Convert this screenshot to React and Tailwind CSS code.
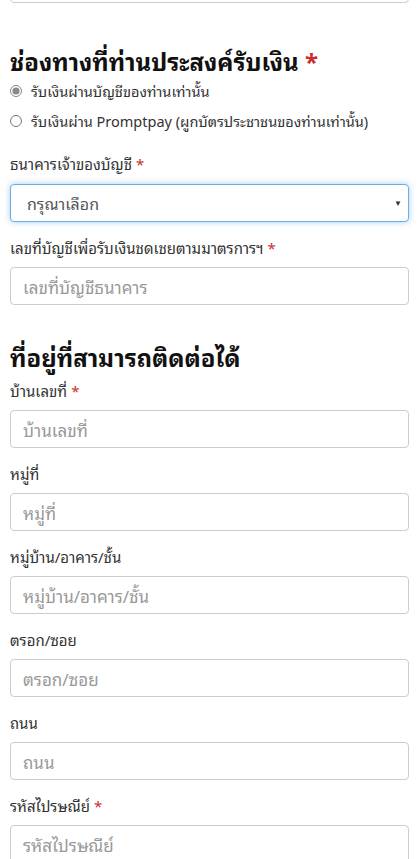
import React, { useState } from "react";

const FONT = {
  fontFamily:
    '"Noto Sans Thai Looped", Loma, Garuda, "Leelawadee UI", Tahoma, "Noto Sans Thai", "Noto Sans", sans-serif',
};

const Req = () => <span className="text-[#c9302c] ml-1">*</span>;

const Field = ({ label, required, placeholder }) => (
  <div className="mb-[15px]">
    <label className="block text-[15px] leading-[20px] text-[#333] mb-[10px]">
      {label}
      {required && <Req />}
    </label>
    <input
      type="text"
      placeholder={placeholder}
      className="w-full h-[38px] border border-[#ccc] rounded-[4px] px-3 text-[17px] text-[#555] placeholder:text-[#999] bg-white outline-none"
    />
  </div>
);

const App = () => {
  const [channel, setChannel] = useState("bank");

  return (
    <div className="bg-white min-h-screen px-[10px] overflow-hidden" style={FONT}>
      <div className="-mt-[35px] h-[38px] border border-[#ccc] rounded-[4px]"></div>

      <h2 className="mt-[42px] text-[24px] leading-[30px] font-bold text-[#111]">
        ช่องทางที่ท่านประสงค์รับเงิน <span className="text-[#c9302c]">*</span>
      </h2>

      <div className="mt-[6px] space-y-[10px] text-[14.5px] leading-[20px] text-[#333]">
        <label className="flex items-center gap-[9px]">
          <input
            type="radio"
            name="channel"
            checked={channel === "bank"}
            onChange={() => setChannel("bank")}
            className="w-[12px] h-[12px] m-0 accent-[#888]"
          />
          รับเงินผ่านบัญชีของท่านเท่านั้น
        </label>
        <label className="flex items-center gap-[9px]">
          <input
            type="radio"
            name="channel"
            checked={channel === "promptpay"}
            onChange={() => setChannel("promptpay")}
            className="w-[12px] h-[12px] m-0 accent-[#888]"
          />
          รับเงินผ่าน Promptpay (ผูกบัตรประชาชนของท่านเท่านั้น)
        </label>
      </div>

      <div className="mt-[22px] mb-[15px]">
        <label className="block text-[15px] leading-[20px] text-[#333] mb-[11px]">
          ธนาคารเจ้าของบัญชี
          <Req />
        </label>
        <div className="relative">
          <select className="w-full h-[38px] appearance-none border border-[#66afe9] rounded-[4px] pl-4 pr-8 text-[16px] text-[#555] bg-white outline-none shadow-[0_0_6px_rgba(102,175,233,0.6)]">
            <option>กรุณาเลือก</option>
          </select>
          <span className="pointer-events-none absolute right-[7px] top-[13px] text-[8px] text-[#333]">▼</span>
        </div>
      </div>

      <Field label="เลขที่บัญชีเพื่อรับเงินชดเชยตามมาตรการฯ" required placeholder="เลขที่บัญชีธนาคาร" />

      <h2 className="mt-[36px] text-[24px] leading-[30px] font-bold text-[#111] mb-[9px]">
        ที่อยู่ที่สามารถติดต่อได้
      </h2>

      <Field label="บ้านเลขที่" required placeholder="บ้านเลขที่" />
      <Field label="หมู่ที่" placeholder="หมู่ที่" />
      <Field label="หมู่บ้าน/อาคาร/ชั้น" placeholder="หมู่บ้าน/อาคาร/ชั้น" />
      <Field label="ตรอก/ซอย" placeholder="ตรอก/ซอย" />
      <Field label="ถนน" placeholder="ถนน" />
      <Field label="รหัสไปรษณีย์" required placeholder="รหัสไปรษณีย์" />
    </div>
  );
};

export default App;
